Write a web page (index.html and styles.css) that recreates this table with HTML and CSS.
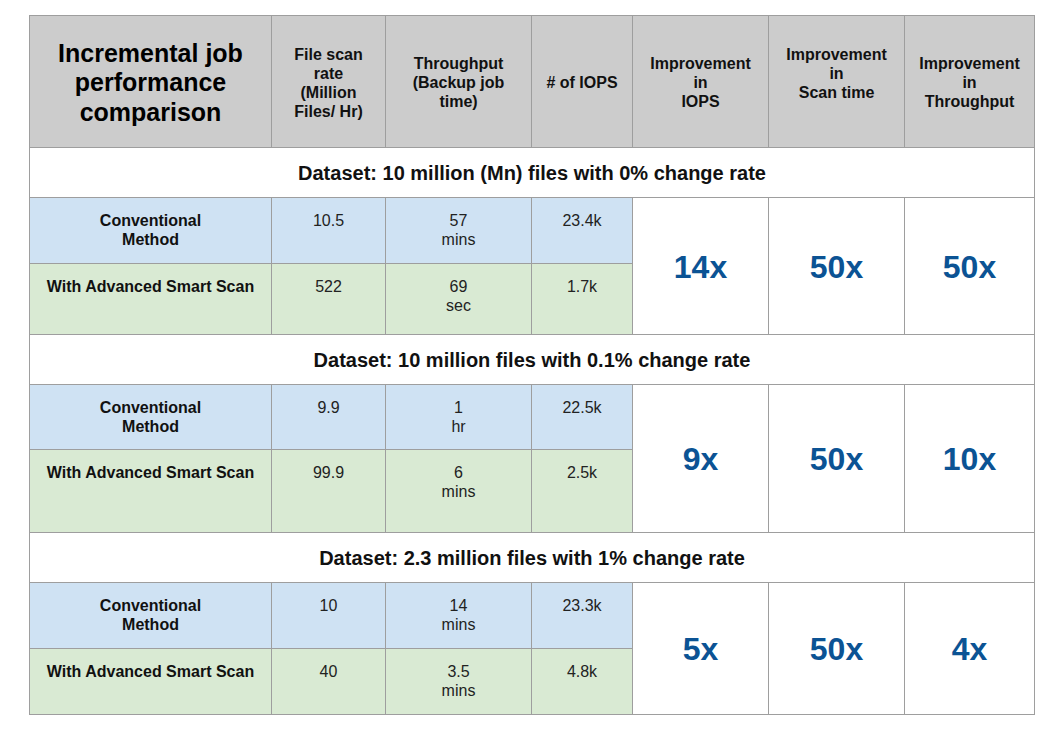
FILE: index.html
```html
<!DOCTYPE html>
<html lang="en">
<head>
<meta charset="utf-8">
<title>Incremental job performance comparison</title>
<link rel="stylesheet" href="styles.css">
</head>
<body>
<div class="table">
  <div class="cell head title">Incremental job<br>performance<br>comparison</div>
  <div class="cell head">File scan<br>rate<br>(Million<br>Files/ Hr)</div>
  <div class="cell head">Throughput<br>(Backup job<br>time)</div>
  <div class="cell head"># of IOPS</div>
  <div class="cell head">Improvement<br>in<br>IOPS</div>
  <div class="cell head">Improvement<br>in<br>Scan time<br>&nbsp;</div>
  <div class="cell head">Improvement<br>in<br>Throughput</div>

  <div class="cell dataset">Dataset: 10 million (Mn) files with 0% change rate</div>
  <div class="cell conv label">Conventional<br>Method</div>
  <div class="cell conv val">10.5</div>
  <div class="cell conv val">57<br>mins</div>
  <div class="cell conv val">23.4k</div>
  <div class="cell big">14x</div>
  <div class="cell big">50x</div>
  <div class="cell big">50x</div>
  <div class="cell smart label">With Advanced Smart Scan</div>
  <div class="cell smart val">522</div>
  <div class="cell smart val">69<br>sec</div>
  <div class="cell smart val">1.7k</div>

  <div class="cell dataset">Dataset: 10 million files with 0.1% change rate</div>
  <div class="cell conv label">Conventional<br>Method</div>
  <div class="cell conv val">9.9</div>
  <div class="cell conv val">1<br>hr</div>
  <div class="cell conv val">22.5k</div>
  <div class="cell big">9x</div>
  <div class="cell big">50x</div>
  <div class="cell big">10x</div>
  <div class="cell smart label">With Advanced Smart Scan</div>
  <div class="cell smart val">99.9</div>
  <div class="cell smart val">6<br>mins</div>
  <div class="cell smart val">2.5k</div>

  <div class="cell dataset">Dataset: 2.3 million files with 1% change rate</div>
  <div class="cell conv label">Conventional<br>Method</div>
  <div class="cell conv val">10</div>
  <div class="cell conv val">14<br>mins</div>
  <div class="cell conv val">23.3k</div>
  <div class="cell big">5x</div>
  <div class="cell big">50x</div>
  <div class="cell big">4x</div>
  <div class="cell smart label">With Advanced Smart Scan</div>
  <div class="cell smart val">40</div>
  <div class="cell smart val">3.5<br>mins</div>
  <div class="cell smart val">4.8k</div>
</div>
</body>
</html>
```
FILE: styles.css
```css
html, body {
  margin: 0;
  padding: 0;
  background: #ffffff;
}

body {
  padding: 15px 0 0 29px;
  font-family: "Liberation Sans", Arial, sans-serif;
  color: #000;
}

.table {
  display: grid;
  width: 1006px;
  box-sizing: border-box;
  padding: 1px;
  gap: 1px;
  background: #9e9e9e;
  grid-template-columns: 241px 113px 145px 100px 135px 135px 129px;
  grid-template-rows: 131px 49px 65px 70px 49px 64px 82px 49px 65px 65px;
}

.cell {
  background: #fff;
  text-align: center;
  font-size: 16px;
  line-height: 19px;
  box-sizing: border-box;
}

.head {
  background: #cccccc;
  font-weight: bold;
  display: flex;
  align-items: center;
  justify-content: center;
  padding-top: 2px;
  color: #111;
}

.title {
  font-size: 25px;
  line-height: 29.5px;
  padding-top: 3px;
  color: #000;
}

.dataset {
  grid-column: 1 / -1;
  display: flex;
  align-items: center;
  justify-content: center;
  padding-top: 2px;
  font-size: 20px;
  line-height: 23px;
  font-weight: bold;
  color: #111;
}

.conv {
  background: #cfe2f3;
}

.smart {
  background: #d9ead3;
}

.label,
.val {
  padding-top: 13px;
}

.label {
  font-weight: bold;
  color: #111;
}

.val {
  color: #222;
}

.big {
  grid-row: span 2;
  display: flex;
  align-items: center;
  justify-content: center;
  padding-top: 2px;
  font-size: 32px;
  font-weight: bold;
  color: #0b5394;
}
```
